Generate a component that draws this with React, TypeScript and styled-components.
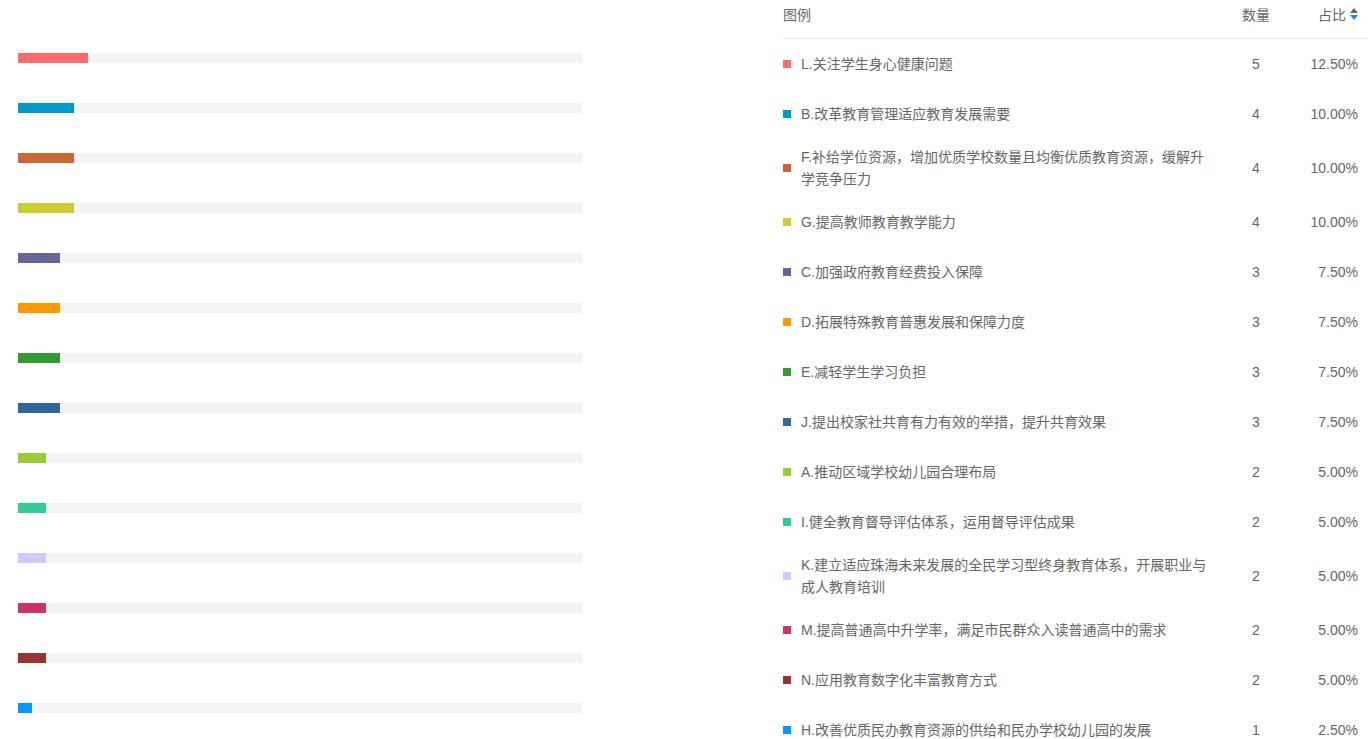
import styled, { createGlobalStyle } from "styled-components";

const GlobalStyle = createGlobalStyle`
  body {
    margin: 0;
    background: #fff;
    font-family: "Liberation Sans", "Noto Sans CJK SC", sans-serif;
  }
`;

type Item = { label: string; count: number; pct: string; color: string };

const items: Item[] = [
  { label: "L.关注学生身心健康问题", count: 5, pct: "12.50%", color: "#ff6b6b" },
  { label: "B.改革教育管理适应教育发展需要", count: 4, pct: "10.00%", color: "#0099cc" },
  { label: "F.补给学位资源，增加优质学校数量且均衡优质教育资源，缓解升学竞争压力", count: 4, pct: "10.00%", color: "#cc6633" },
  { label: "G.提高教师教育教学能力", count: 4, pct: "10.00%", color: "#cccc33" },
  { label: "C.加强政府教育经费投入保障", count: 3, pct: "7.50%", color: "#666699" },
  { label: "D.拓展特殊教育普惠发展和保障力度", count: 3, pct: "7.50%", color: "#ff9900" },
  { label: "E.减轻学生学习负担", count: 3, pct: "7.50%", color: "#339933" },
  { label: "J.提出校家社共育有力有效的举措，提升共育效果", count: 3, pct: "7.50%", color: "#336699" },
  { label: "A.推动区域学校幼儿园合理布局", count: 2, pct: "5.00%", color: "#99cc33" },
  { label: "I.健全教育督导评估体系，运用督导评估成果", count: 2, pct: "5.00%", color: "#33cc99" },
  { label: "K.建立适应珠海未来发展的全民学习型终身教育体系，开展职业与成人教育培训", count: 2, pct: "5.00%", color: "#ccccff" },
  { label: "M.提高普通高中升学率，满足市民群众入读普通高中的需求", count: 2, pct: "5.00%", color: "#cc3366" },
  { label: "N.应用教育数字化丰富教育方式", count: 2, pct: "5.00%", color: "#993333" },
  { label: "H.改善优质民办教育资源的供给和民办学校幼儿园的发展", count: 1, pct: "2.50%", color: "#0099ff" },
];

function App() {
  return (
    <>
      <GlobalStyle />
      <Page>
        <Chart>
          {items.map((it) => (
            <Track key={it.label}>
              <Fill $color={it.color} style={{ width: it.count * 14 }} />
            </Track>
          ))}
        </Chart>
        <Table>
          <HeadRow>
            <LegendCell>图例</LegendCell>
            <CountCell>数量</CountCell>
            <PctCell>
              占比
              <svg width="8" height="12" viewBox="0 0 8 12">
                <path d="M4 0 L8 5 L0 5 Z" fill="#666" />
                <path d="M4 12 L8 7 L0 7 Z" fill="#1e88e5" />
              </svg>
            </PctCell>
          </HeadRow>
          {items.map((it) => (
            <Row key={it.label}>
              <LegendCell>
                <Swatch $color={it.color} />
                <LabelText>{it.label}</LabelText>
              </LegendCell>
              <CountCell>{it.count}</CountCell>
              <PctCell>{it.pct}</PctCell>
            </Row>
          ))}
        </Table>
      </Page>
    </>
  );
}

export default App;

const Page = styled.div`
  display: flex;
  width: 1368px;
  color: #666;
  font-size: 14px;
`;

const Chart = styled.div`
  width: 564px;
  margin: 53px 0 0 18px;
  display: flex;
  flex-direction: column;
  gap: 40px;
`;

const Track = styled.div`
  height: 10px;
  background: #f4f4f4;
`;

const Fill = styled.div<{ $color: string }>`
  height: 100%;
  background: ${({ $color }) => $color};
`;

const Table = styled.div`
  margin-left: 201px;
  width: 585px;
`;

const HeadRow = styled.div`
  display: flex;
  align-items: center;
  height: 27px;
  padding-bottom: 11px;
  border-bottom: 1px solid #e8e8e8;
  color: #666;
`;

const Row = styled.div`
  display: flex;
  align-items: center;
  min-height: 50px;
  padding: 7px 0;
  box-sizing: border-box;
`;

const LegendCell = styled.div`
  flex: 0 0 428px;
  display: flex;
  align-items: center;
`;

const Swatch = styled.span<{ $color: string }>`
  flex: 0 0 8px;
  height: 8px;
  background: ${({ $color }) => $color};
  margin-right: 10px;
`;

const LabelText = styled.span`
  width: 410px;
  line-height: 22px;
`;

const CountCell = styled.div`
  flex: 0 0 90px;
  text-align: center;
`;

const PctCell = styled.div`
  flex: 1;
  text-align: right;
  padding-right: 10px;
  display: flex;
  align-items: center;
  justify-content: flex-end;
  gap: 4px;
`;
